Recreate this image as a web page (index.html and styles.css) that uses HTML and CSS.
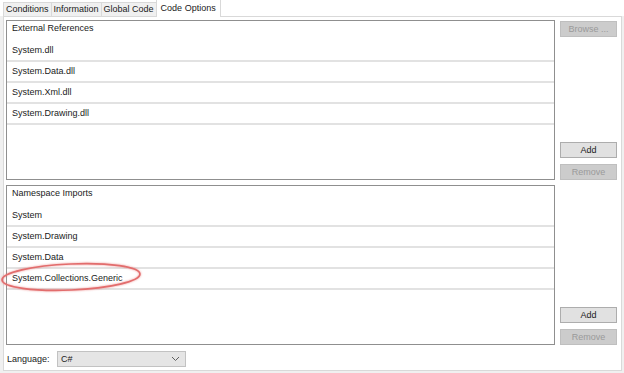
FILE: index.html
```html
<!DOCTYPE html>
<html lang="en">
<head>
    <meta charset="UTF-8">
    <title>Code Options</title>
    <link rel="stylesheet" href="styles.css">
</head>
<body>

    <!-- タブ -->
    <div class="tabs">
        <div class="tab">Conditions</div>
        <div class="tab">Information</div>
        <div class="tab">Global Code</div>
        <div class="tab active">Code Options</div>
    </div>

    <div class="panel">

        <!-- 参照 -->
        <div class="section">
            <div class="list">
                <div class="list-head">External References</div>
                <div class="row">System.dll</div>
                <div class="row">System.Data.dll</div>
                <div class="row">System.Xml.dll</div>
                <div class="row">System.Drawing.dll</div>
            </div>
            <div class="buttons">
                <div class="btn disabled">Browse ...</div>
                <div class="btn push">Add</div>
                <div class="btn disabled">Remove</div>
            </div>
        </div>

        <!-- インポート -->
        <div class="section">
            <div class="list">
                <div class="list-head">Namespace Imports</div>
                <div class="row">System</div>
                <div class="row">System.Drawing</div>
                <div class="row">System.Data</div>
                <div class="row">System.Collections.Generic</div>
            </div>
            <div class="buttons">
                <div class="btn push">Add</div>
                <div class="btn disabled">Remove</div>
            </div>
        </div>

        <div class="lang-row">
            <span class="lang-label">Language:</span>
            <div class="combo">
                <span>C#</span>
                <svg class="chevron" width="9" height="6" viewBox="0 0 9 6">
                    <polyline points="1,1 4.5,4.5 8,1" fill="none" stroke="#606060" stroke-width="1"/>
                </svg>
            </div>
        </div>
    </div>

    <!-- 赤い丸印 -->
    <svg class="mark" width="146" height="36" viewBox="0 0 146 36">
        <ellipse cx="71" cy="18" rx="69" ry="13" transform="rotate(-2.5 71 18)"
                 fill="none" stroke="#e26d6d" stroke-width="1.7"/>
    </svg>

</body>
</html>
```

FILE: styles.css
```css
/* 全体 */
body {
    margin: 0;
    background: #f0f0f0;
    font-family: "Liberation Sans", Arial, sans-serif;
    font-size: 9px;
    color: #1a1a1a;
    position: relative;
}

/* タブ */
.tabs {
    display: flex;
    align-items: flex-end;
    height: 16px;
    padding-left: 3px;
    background: #fff;
}

.tab {
    height: 13px;
    line-height: 13px;
    padding: 0 2px;
    border: 1px solid #d9d9d9;
    border-bottom: none;
    margin-right: -1px;
    background: #f0f0f0;
}

.tab.active {
    position: relative;
    height: 17px;
    line-height: 16px;
    margin-bottom: -1px;
    padding: 0 4px;
    background: #fff;
    z-index: 1;
}

/* パネル */
.panel {
    width: 614px;
    height: 350px;
    margin-left: 3px;
    border: 1px solid #d9d9d9;
    background: #fff;
    padding: 3px 1px 0 2px;
    box-sizing: content-box;
    display: flex;
    flex-direction: column;
    gap: 5px;
}

.section {
    display: flex;
    gap: 5px;
    height: 160px;
}

.list {
    width: 547px;
    border: 1px solid #8f8f8f;
    background: #fff;
}

.list-head {
    height: 20px;
    line-height: 14px;
    padding-left: 5px;
}

.row {
    height: 19px;
    line-height: 19px;
    padding-left: 5px;
    border-bottom: 2px solid #e2e2e2;
}

/* ボタン */
.buttons {
    width: 57px;
    display: flex;
    flex-direction: column;
    gap: 6px;
    padding-top: 1px;
}

.btn {
    height: 14px;
    line-height: 14px;
    text-align: center;
    border: 1px solid #adadad;
    background: #e1e1e1;
}

.btn.disabled {
    border-color: #bfbfbf;
    background: #cccccc;
    color: #9a9a9a;
}

/* Add は下寄せ */
.btn.push {
    margin-top: auto;
}

/* 言語 */
.lang-row {
    display: flex;
    align-items: center;
    gap: 8px;
    padding-left: 1px;
    margin-top: 1px;
}

.lang-label {
    width: 42px;
}

.combo {
    width: 121px;
    height: 14px;
    line-height: 14px;
    padding: 0 3px;
    border: 1px solid #c2c2c2;
    background: #e5e5e5;
    display: flex;
    justify-content: space-between;
    align-items: center;
}

.chevron {
    margin-right: 2px;
}

/* 丸印 */
.mark {
    position: absolute;
    left: 0;
    top: 259px;
    filter: drop-shadow(0 0 1px rgba(230, 90, 90, 0.6));
}
```
